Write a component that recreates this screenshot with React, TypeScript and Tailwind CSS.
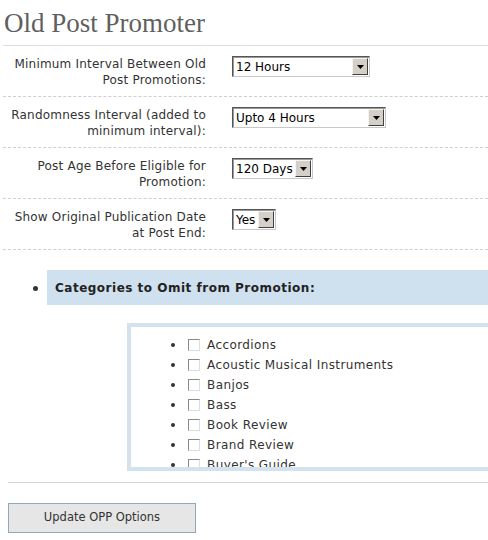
import React from "react";

const labelFont = { fontFamily: '"DejaVu Sans", Verdana, sans-serif' };

const options = [
  { label: ["Minimum Interval Between Old", "Post Promotions:"], value: "12 Hours", width: "w-[138px]" },
  { label: ["Randomness Interval (added to", "minimum interval):"], value: "Upto 4 Hours", width: "w-[154px]" },
  { label: ["Post Age Before Eligible for", "Promotion:"], value: "120 Days", width: "w-[81px]" },
  { label: ["Show Original Publication Date", "at Post End:"], value: "Yes", width: "w-[44px]" },
];

const categories = [
  "Accordions",
  "Acoustic Musical Instruments",
  "Banjos",
  "Bass",
  "Book Review",
  "Brand Review",
  "Buyer's Guide",
  "Cellos",
];

function FakeSelect({ value, width }: { value: string; width: string }) {
  return (
    <div
      className={`${width} h-[21px] flex items-center bg-white border border-t-[#555] border-l-[#555] border-b-[#c8c8c8] border-r-[#c8c8c8] shadow-[inset_1px_1px_0_#999]`}
    >
      <span className="flex-1 min-w-0 pl-[3px] text-[12px] text-black leading-none whitespace-nowrap">{value}</span>
      <span className="shrink-0 w-[16px] h-[17px] mr-[1px] flex items-center justify-center bg-[#d4d0c8] border border-t-[#f4f4f4] border-l-[#f4f4f4] border-b-[#404040] border-r-[#404040]">
        <svg width="7" height="4" viewBox="0 0 7 4">
          <path d="M0 0h7L3.5 4z" fill="#000" />
        </svg>
      </span>
    </div>
  );
}

export default function App() {
  return (
    <div className="w-[488px] h-[540px] overflow-hidden bg-white text-[#333]" style={labelFont}>
      {/* Title */}
      <div className="pl-[4px] pt-[8px] pb-[7px] border-b border-[#dcdcdc] ml-[3px]">
        <h2
          className="text-[27px] leading-[30px] text-[#5f5f5f] -ml-[3px]"
          style={{ fontFamily: '"Liberation Serif", Georgia, serif' }}
        >
          Old Post Promoter
        </h2>
      </div>

      {/* Option rows */}
      <div className="ml-[3px]">
        {options.map((o) => (
          <div key={o.value} className="flex items-start pt-[9px] pb-[8px] h-[51px] border-b border-dashed border-[#cfcfcf]">
            <div className="w-[203px] text-right text-[12px] tracking-[0.2px] leading-[16px] pt-[1px]">
              <div>{o.label[0]}</div>
              <div>{o.label[1]}</div>
            </div>
            <div className="ml-[26px] pt-[1px]">
              <FakeSelect value={o.value} width={o.width} />
            </div>
          </div>
        ))}
      </div>

      {/* Categories */}
      <div className="mt-[20px] flex items-start">
        <span className="ml-[33px] mt-[16px] w-[5px] h-[5px] rounded-full bg-[#333] shrink-0" />
        <div className="ml-[9px] flex-1">
          <div className="h-[35px] bg-[#cfe0ee] flex items-center pl-[8px] text-[12px] tracking-[0.5px] font-bold text-[#222]">
            Categories to Omit from Promotion:
          </div>
          <div className="mt-[18px] ml-[80px] h-[148px] border-[4px] border-r-0 border-[#d3e2ed] overflow-hidden">
            <ul className="pt-[8px] pl-[40px]">
              {categories.map((c) => (
                <li key={c} className="flex items-center h-[20px] text-[12px] tracking-[0.4px]">
                  <span className="w-[4px] h-[4px] rounded-full bg-[#333]" />
                  <span className="ml-[13px] w-[12px] h-[12px] bg-white border border-t-[#888] border-l-[#888] border-b-[#ddd] border-r-[#ddd]" />
                  <span className="ml-[7px]">{c}</span>
                </li>
              ))}
            </ul>
          </div>
        </div>
      </div>

      {/* Footer */}
      <div className="ml-[8px] mt-[11px] border-t border-[#d4d4d4]" />
      <button className="ml-[8px] mt-[20px] w-[188px] h-[30px] bg-[#e6e6e6] border border-[#93a9b9] text-[11.5px] text-[#333]">
        Update OPP Options
      </button>
    </div>
  );
}
